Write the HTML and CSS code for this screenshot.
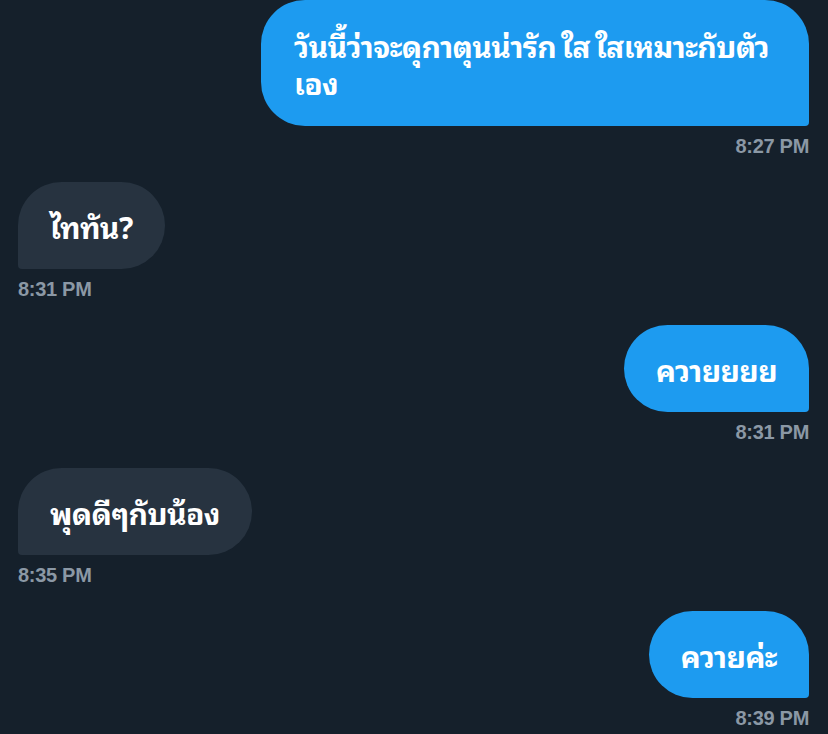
FILE: index.html
```html
<!DOCTYPE html>
<html lang="th">
<head>
<meta charset="utf-8">
<link rel="stylesheet" href="styles.css">
</head>
<body>
<div class="chat">
  <div class="msg out first">
    <div class="bubble">วันนี้ว่าจะดุกาตุนน่ารัก ใส ใสเหมาะกับตัวเอง</div>
    <div class="time">8:27 PM</div>
  </div>
  <div class="msg in">
    <div class="bubble">ไททัน?</div>
    <div class="time">8:31 PM</div>
  </div>
  <div class="msg out">
    <div class="bubble">ควายยยย</div>
    <div class="time">8:31 PM</div>
  </div>
  <div class="msg in">
    <div class="bubble">พุดดีๆกับน้อง</div>
    <div class="time">8:35 PM</div>
  </div>
  <div class="msg out">
    <div class="bubble">ควายค่ะ</div>
    <div class="time">8:39 PM</div>
  </div>
</div>
</body>
</html>
```

FILE: styles.css
```css
html, body {
  margin: 0;
  padding: 0;
  background: #15202b;
}
body {
  width: 828px;
  height: 734px;
  overflow: hidden;
  font-family: "Noto Sans Thai Looped", "Noto Sans Thai", "Noto Sans", "Liberation Sans", sans-serif;
}
.chat {
  display: flex;
  flex-direction: column;
  padding: 0 19px 0 18px;
}
.msg {
  display: flex;
  flex-direction: column;
  margin-top: 25px;
}
.msg.first {
  margin-top: 0;
}
.msg.out {
  align-items: flex-end;
}
.msg.in {
  align-items: flex-start;
}
.bubble {
  box-sizing: border-box;
  max-width: 548px;
  padding: 25px 32px 25px 32px;
  font-size: 30px;
  line-height: 37px;
  font-weight: 700;
  color: #ffffff;
  border-radius: 44px;
  letter-spacing: -0.6px;
  word-spacing: -2px;
}
.msg.first .bubble {
  padding: 26px 28px 26px 33px;
}
.out .bubble {
  background: #1d9bf0;
  border-bottom-right-radius: 4px;
}
.in .bubble {
  background: #273340;
  border-bottom-left-radius: 4px;
}
.time {
  margin-top: 9px;
  font-family: "Liberation Sans", Arial, sans-serif;
  font-size: 20px;
  line-height: 22px;
  font-weight: 700;
  color: #8b98a5;
  letter-spacing: -0.3px;
}
```
